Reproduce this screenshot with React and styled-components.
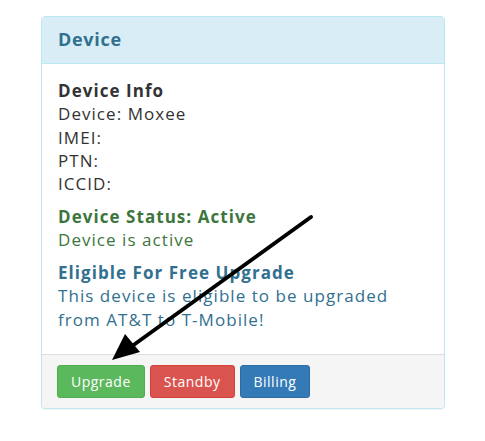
import styled, { createGlobalStyle } from 'styled-components'

const GlobalStyle = createGlobalStyle`
  html, body {
    margin: 0;
    padding: 0;
    background: #fff;
  }
  body {
    font-family: 'Open Sans', 'Liberation Sans', sans-serif;
    color: #333;
  }
`

const Page = styled.div`
  position: relative;
  padding: 16px 0 0 41px;
  width: 485px;
  height: 441px;
  box-sizing: border-box;
`

const Panel = styled.div`
  width: 404px;
  box-sizing: border-box;
  border: 1px solid #bce8f1;
  border-radius: 4px;
  background: #fff;
  box-shadow: 0 1px 1px rgba(0, 0, 0, 0.05);
  overflow: hidden;
`

const PanelHeading = styled.div`
  background: #d9edf7;
  border-bottom: 1px solid #bce8f1;
  color: #31708f;
  height: 47px;
  display: flex;
  align-items: center;
  padding: 0 16px 2px;
  box-sizing: border-box;
  font-size: 18px;
  font-weight: 700;
  letter-spacing: 0.7px;
`

const PanelBody = styled.div`
  padding: 15px 16px 13.5px;
`

const Section = styled.div`
  margin-bottom: 9.5px;
  font-size: 17px;
  line-height: 23.3px;
  letter-spacing: 1.05px;
  color: ${(p) => p.$color || '#333'};
`

const SectionTitle = styled.div`
  font-weight: 700;
`

const PanelFooter = styled.div`
  background: #f5f5f5;
  border-top: 1px solid #ddd;
  padding: 10px 15px;
  display: flex;
  gap: 5px;
`

const Button = styled.button`
  height: 33px;
  padding: 0 13px;
  border: 1px solid ${(p) => p.$border};
  background: ${(p) => p.$bg};
  color: #fff;
  border-radius: 3px;
  font-family: inherit;
  font-size: 14px;
  letter-spacing: 0.5px;
  cursor: pointer;
`

const Arrow = styled.svg`
  position: absolute;
  left: 0;
  top: 0;
  pointer-events: none;
`

export default function App() {
  return (
    <>
      <GlobalStyle />
      <Page>
        <Panel>
          <PanelHeading>Device</PanelHeading>
          <PanelBody>
            <Section>
              <SectionTitle>Device Info</SectionTitle>
              <div>Device: Moxee</div>
              <div>IMEI:</div>
              <div>PTN:</div>
              <div>ICCID:</div>
            </Section>
            <Section $color="#3c763d">
              <SectionTitle>Device Status: Active</SectionTitle>
              <div>Device is active</div>
            </Section>
            <Section $color="#31708f">
              <SectionTitle>Eligible For Free Upgrade</SectionTitle>
              <div>This device is eligible to be upgraded</div>
              <div>from AT&amp;T to T-Mobile!</div>
            </Section>
          </PanelBody>
          <PanelFooter>
            <Button $bg="#5cb85c" $border="#4cae4c">Upgrade</Button>
            <Button $bg="#d9534f" $border="#d43f3a">Standby</Button>
            <Button $bg="#337ab7" $border="#2e6da4">Billing</Button>
          </PanelFooter>
        </Panel>
        <Arrow width="485" height="441" viewBox="0 0 485 441">
          <line x1="311" y1="217" x2="128" y2="349" stroke="#000" strokeWidth="4" strokeLinecap="round" />
          <polygon points="112,360 125,334 140,352" fill="#000" />
        </Arrow>
      </Page>
    </>
  )
}
